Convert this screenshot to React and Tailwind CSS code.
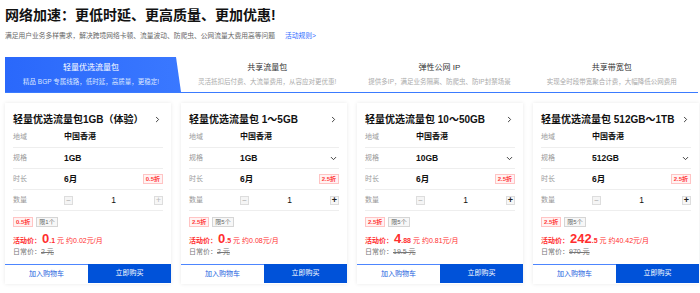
import React from "react";
import { ChevronRight, ChevronDown } from "lucide-react";

const cards = [
  { title: "轻量优选流量包1GB（体验）", spec: "1GB", drop: false, disc: "0.5折", limit: "限1个", big: "0", small: ".1", per: "约0.02元/月", daily: "2 元", plusOff: true },
  { title: "轻量优选流量包 1～5GB", spec: "1GB", drop: true, disc: "2.5折", limit: "限5个", big: "0", small: ".5", per: "约0.08元/月", daily: "2 元", plusOff: false },
  { title: "轻量优选流量包 10～50GB", spec: "10GB", drop: true, disc: "2.5折", limit: "限5个", big: "4", small: ".88", per: "约0.81元/月", daily: "19.5 元", plusOff: false },
  { title: "轻量优选流量包 512GB～1TB", spec: "512GB", drop: true, disc: "2.5折", limit: "限5个", big: "242", small: ".5", per: "约40.42元/月", daily: "970 元", plusOff: false },
];

const tabs = [
  { t: "共享流量包", s: "灵活抵扣后付费、大流量费用，从容应对更优惠!" },
  { t: "弹性公网 IP", s: "提供多IP，满足业务隔离、防爬虫、防IP封禁场景" },
  { t: "共享带宽包", s: "实现全时段带宽聚合计费，大幅降低公网费用" },
];

function Row({ label, children }) {
  return (
    <div className="flex items-center h-[21px] border-b border-[#eeeeee]">
      <div className="w-[51px] text-[7px] text-[#999]">{label}</div>
      <div className="flex-1 flex items-center">{children}</div>
    </div>
  );
}

function Card({ c }) {
  return (
    <div className="flex flex-col h-[181px] bg-white shadow-[0_0_4px_rgba(0,0,0,0.09)]">
      <div className="px-[8px] flex-1 flex flex-col">
        <div className="flex items-center justify-between pt-[9px] h-[24px]">
          <span className="text-[10px] leading-[12px] font-bold text-[#111] whitespace-nowrap">{c.title}</span>
          <ChevronRight size={9} strokeWidth={2.5} className="text-[#333] mr-[1px]" />
        </div>
        <Row label="地域">
          <span className="text-[8px] font-bold text-[#111]">中国香港</span>
        </Row>
        <Row label="规格">
          <span className="text-[8.5px] font-bold text-[#111] flex-1">{c.spec}</span>
          {c.drop && <ChevronDown size={9} strokeWidth={2.5} className="text-[#333] mr-[1px]" />}
        </Row>
        <Row label="时长">
          <span className="text-[8.5px] font-bold text-[#111] flex-1">6月</span>
          <span className="text-[6px] leading-[8px] px-[2px] border border-[#ffc4c4] bg-[#fff3f3] text-[#ff3b3b] font-bold">{c.disc}</span>
        </Row>
        <Row label="数量">
          <div className="flex items-center w-full">
            <span className="w-[9px] h-[9px] border border-[#dddddd] bg-[#f5f5f5] text-[8px] leading-[7px] text-[#aaa] flex items-center justify-center">−</span>
            <span className="flex-1 text-center text-[8.5px] text-[#111]">1</span>
            <span className={"w-[9px] h-[9px] border border-[#dddddd] bg-[#f7f7f7] text-[9px] leading-[7px] flex items-center justify-center " + (c.plusOff ? "text-[#bbb]" : "text-[#222] font-bold")}>+</span>
          </div>
        </Row>
        <div className="flex items-center gap-[3px] mt-[6px]">
          <span className="text-[6px] leading-[8px] px-[2px] border border-[#ffc4c4] bg-[#fff3f3] text-[#ff3b3b] font-bold">{c.disc}</span>
          <span className="text-[6px] leading-[8px] px-[2px] border border-[#d5d5d5] bg-[#f7f7f7] text-[#666]">{c.limit}</span>
        </div>
        <div className="flex items-baseline h-[15px] mt-[5px] text-[#ff2e2e] whitespace-nowrap">
          <span className="text-[7px] font-bold">活动价：</span>
          <span className="text-[13px] leading-[14px] font-bold ml-[1px]">{c.big}</span>
          <span className="text-[7px] font-bold">{c.small}</span>
          <span className="text-[7px] ml-[2px]">元</span>
          <span className="text-[7px] ml-[2px]">{c.per}</span>
        </div>
        <div className="flex items-center h-[10px] text-[7px] text-[#777]">
          <span>日常价：</span>
          <span className="line-through">{c.daily}</span>
        </div>
      </div>
      <div className="flex h-[19px] mb-[1px]">
        <div className="flex-1 flex items-center justify-center border-t border-[#4d86ff] text-[7px] text-[#1d5fe0] bg-white">加入购物车</div>
        <div className="flex-1 flex items-center justify-center bg-[#0052d9] text-[7px] text-white">立即购买</div>
      </div>
    </div>
  );
}

export default function App() {
  return (
    <div className="w-[700px] h-[293px] overflow-hidden bg-white font-['Liberation_Sans','Noto_Sans_CJK_SC',sans-serif]">
      <div className="pl-[5px] pt-[6px]">
        <div className="text-[14px] leading-[19px] font-bold text-[#111]">网络加速：更低时延、更高质量、更加优惠!</div>
        <div className="mt-[6px] flex items-center text-[6.75px] leading-[10px] text-[#666] whitespace-nowrap">
          <span>满足用户业务多样需求，解决跨境网络卡顿、流量波动、防爬虫、公网流量大费用高等问题</span>
          <span className="ml-[10px] text-[#2c68ff]">活动规则&gt;</span>
        </div>
      </div>
      <div className="ml-[5px] mr-[2px] mt-[16px] flex h-[36px] border-b border-[#3b7bff]">
        <div className="w-[176px] h-full flex flex-col items-center justify-center bg-gradient-to-r from-[#2a68fb] to-[#3a78ff] [clip-path:polygon(0_0,171px_0,100%_100%,0_100%)] pr-[4px]">
          <div className="text-[8px] leading-[12px] text-white">轻量优选流量包</div>
          <div className="mt-[3px] text-[6.5px] leading-[10px] text-[#dbe6ff] whitespace-nowrap">精品 BGP 专属线路，低时延，高质量，更稳定!</div>
        </div>
        {tabs.map((t) => (
          <div key={t.t} className="flex-1 h-full flex flex-col items-center justify-center">
            <div className="text-[8px] leading-[12px] text-[#333]">{t.t}</div>
            <div className="mt-[3px] text-[6.5px] leading-[10px] text-[#aaa] whitespace-nowrap">{t.s}</div>
          </div>
        ))}
      </div>
      <div className="mt-[10px] pl-[5px] pr-[1px] grid grid-cols-4 gap-[10px]">
        {cards.map((c) => (
          <Card key={c.title} c={c} />
        ))}
      </div>
    </div>
  );
}
